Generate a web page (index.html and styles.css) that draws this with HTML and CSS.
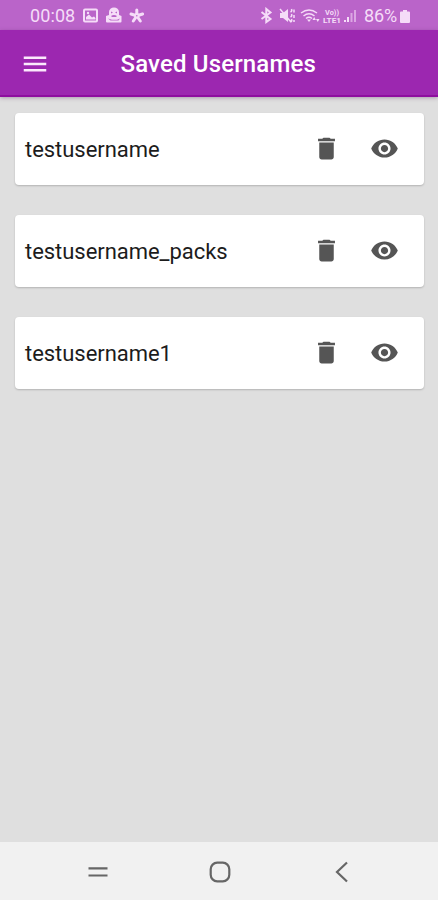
FILE: index.html
```html
<!DOCTYPE html>
<html lang="en">
<head>
<meta charset="utf-8">
<title>Saved Usernames</title>
<link rel="stylesheet" href="styles.css">
</head>
<body>
<svg width="0" height="0" class="defs">
  <symbol id="trash" viewBox="0 0 24 24"><path d="M6 19c0 1.100.9 2 2 2h8c1.100 0 2-.9 2-2V7H6v12zM19 4h-3.500l-1-1h-5l-1 1H5v2h14V4z"/></symbol>
  <symbol id="eye" viewBox="0 0 24 24"><path d="M12 4.500C7 4.500 2.730 7.610 1 12c1.730 4.390 6 7.500 11 7.500s9.270-3.110 11-7.500c-1.730-4.390-6-7.500-11-7.500zM12 17c-2.760 0-5-2.240-5-5s2.240-5 5-5 5 2.240 5 5-2.240 5-5 5zm0-8c-1.660 0-3 1.340-3 3s1.340 3 3 3 3-1.340 3-3-1.340-3-3-3z"/></symbol>
</svg>
<div class="screen">
  <div class="status">
    <span class="time">00:08</span>
    <svg class="notifications" width="64" height="18" viewBox="0 0 64 18">
      <path fill-rule="evenodd" d="M3 1.500h11a2 2 0 0 1 2 2v10a2 2 0 0 1-2 2H3a2 2 0 0 1-2-2v-10a2 2 0 0 1 2-2zM3 3.500v10h11v-10zM4 12.500V10l3-2.500 3 3 2-1 1.500 1.500v1.500z"/>
      <circle cx="6" cy="6" r="1.200"/>
      <path fill-rule="evenodd" d="M27 8V5a5 4.500 0 0 1 10 0v3l2.500 1v5.500a1 1 0 0 1-1 1H25a1 1 0 0 1-1-1V9zM29 4.500l2 1-2 1zM33 5.500l2-1v2zM29 9q3-2 6 0l-1 1h-4zM26 11.500l4 1.300h5l3-1.300-1.500 2h-8z"/>
      <path class="flower" d="M54.800 7V3M53 8.300l-4-1.300M56.600 8.300l4-1.300M53.700 10.500l-2.400 3.500M55.900 10.500l2.400 3.500"/>
      <circle cx="54.800" cy="8.700" r="2.600"/><circle class="core" cx="54.800" cy="8.700" r=".8"/>
    </svg>
    <svg class="signals" width="98" height="18" viewBox="0 0 98 18">
      <path class="line bold" d="M1.500 5l9 7L6.300 15V2l4.200 3.500-9 6.500"/>
      <path d="M20 6h3l5-4v13l-5-4h-3z"/>
      <path class="line" d="M20 2l11 13M30.500 5q2-1 1-3M30.500 10q2-1 1-3M30.500 15q2-1 1-3M34 2.500v3M34 8v3M34 13v2"/>
      <path class="line" d="M41 6q8-6 16 0M43.500 9q5.500-4.500 11 0M46 11.500q3-2.500 6 0"/>
      <path d="M47 12.500h4l-2 2.500zM52.500 13l1.700-3 1.700 3zM56 12h3.500l-1.700 3z"/>
      <text x="65" y="8" textLength="14" lengthAdjust="spacingAndGlyphs">Vo))</text>
      <text x="63" y="15.800" textLength="18" lengthAdjust="spacingAndGlyphs">LTE1</text>
      <path d="M84 13h2v2h-2zM87 10h2v5h-2z"/><path opacity=".55" d="M90.500 6h2v9h-2zM94 3h2v12h-2z"/>
    </svg>
    <span class="percent">86%</span>
    <svg class="battery" width="10" height="13" viewBox="0 0 10 13"><path d="M3 0h4v1.500h2a1 1 0 0 1 1 1V12a1 1 0 0 1-1 1H1a1 1 0 0 1-1-1V2.500a1 1 0 0 1 1-1h2z"/></svg>
  </div>
  <header class="appbar">
    <svg class="menu" width="30" height="30" viewBox="0 0 24 24"><path d="M3 18h18v-2H3v2zm0-5h18v-2H3v2zm0-7v2h18V6H3z"/></svg>
    <h1>Saved Usernames</h1>
  </header>
  <main class="list">
    <div class="card"><span class="name">testusername</span><svg class="icon"><use href="#trash"/></svg><svg class="icon"><use href="#eye"/></svg></div>
    <div class="card"><span class="name">testusername_packs</span><svg class="icon"><use href="#trash"/></svg><svg class="icon"><use href="#eye"/></svg></div>
    <div class="card"><span class="name">testusername1</span><svg class="icon"><use href="#trash"/></svg><svg class="icon"><use href="#eye"/></svg></div>
  </main>
  <nav class="navbar">
    <svg width="22" height="22" viewBox="0 0 22 22"><path d="M1.500 7.300h19M1.500 14.500h19"/></svg>
    <svg width="22" height="22" viewBox="0 0 22 22"><rect x="1.700" y="1.700" width="18.600" height="18.600" rx="6.500"/></svg>
    <svg width="22" height="22" viewBox="0 0 22 22"><path d="M16 1.500L6 11l10 9.500"/></svg>
  </nav>
</div>
</body>
</html>
```
FILE: styles.css
```css
* { box-sizing: border-box; }
body { margin: 0; font-family: Roboto, sans-serif; }
.defs { display: block; }
.screen {
  width: 438px;
  height: 900px;
  display: flex;
  flex-direction: column;
  background: #dfdfdf;
}
.status {
  height: 30px;
  flex: none;
  display: flex;
  align-items: center;
  padding: 1px 28px 0 30px;
  background: #ba64c9;
  color: #f5dcf8;
  fill: #f5dcf8;
  font-size: 18px;
}
.time { width: 46px; letter-spacing: 0.1px; }
.notifications { margin-left: 6px; }
.flower { stroke: #f5dcf8; stroke-width: 3; stroke-linecap: round; }
.core { fill: #ba64c9; }
.signals { margin-left: auto; font-size: 8px; font-weight: 700; }
.line { fill: none; stroke: #f5dcf8; stroke-width: 1.5; }
.bold { stroke-width: 2; }
.percent { margin-left: 6px; width: 35px; letter-spacing: -0.1px; }
.battery { margin: 2px 0 0 1px; }
.appbar {
  height: 67px;
  flex: none;
  display: flex;
  align-items: center;
  padding: 3px 0 0 19.5px;
  background: #9c27b0;
  border-bottom: 2px solid #8e0d9f;
  box-shadow: 0 1px 4px rgba(80, 30, 90, 0.35);
  color: #fff;
}
.menu { fill: #fbe9fc; }
h1 {
  margin: 0 0 0 71px;
  font-size: 24px;
  line-height: 30px;
  font-weight: 500;
  letter-spacing: 0.15px;
  white-space: nowrap;
}
.list {
  flex: 1;
  display: flex;
  flex-direction: column;
  gap: 30px;
  padding: 16px 14.5px 0 15px;
}
.card {
  height: 72px;
  display: flex;
  align-items: center;
  padding: 0 24.5px 0 10px;
  background: #fff;
  border-radius: 4px;
  box-shadow: 0 1px 2px rgba(0, 0, 0, 0.2);
}
.name {
  flex: 1;
  color: #1c1c1c;
  font-size: 22px;
  letter-spacing: -0.04px;
}
.icon { width: 29px; height: 29px; margin-top: -1px; fill: #555; }
.icon + .icon { margin-left: 29px; }
.navbar {
  height: 58px;
  flex: none;
  display: flex;
  align-items: center;
  gap: 100px;
  padding: 1px 0 0 86.5px;
  background: #f1f1f1;
  fill: none;
  stroke: #666;
  stroke-width: 2.2;
}
```
